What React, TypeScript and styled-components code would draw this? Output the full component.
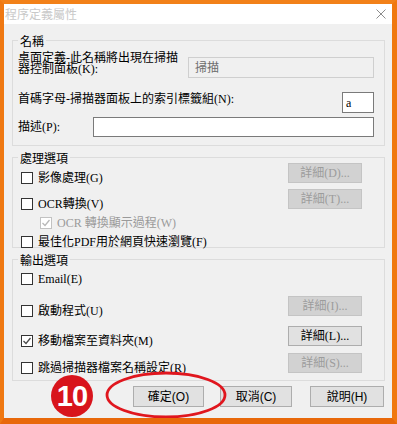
import React from 'react';
import styled, { createGlobalStyle } from 'styled-components';

const GlobalStyle = createGlobalStyle`
  html, body { margin: 0; padding: 0; background: #fff; }
  body {
    font-family: "Liberation Serif", "Noto Sans CJK TC", serif;
    font-size: 12px;
    color: #000;
  }
`;

const Frame = styled.div`
  position: relative;
  width: 397px;
  height: 424px;
  box-sizing: border-box;
  border-style: solid;
  border-color: #f28119 #f0780f #e8680a #ef7812;
  border-width: 4px 5px 6px 4px;
  display: flex;
  flex-direction: column;
  overflow: hidden;
`;

const TitleBar = styled.div`
  height: 20px;
  flex: none;
  background: #fff;
  display: flex;
  align-items: center;
  justify-content: space-between;
  padding: 0 6px 0 1px;
`;

const TitleText = styled.span`
  font-family: "Noto Sans CJK TC", sans-serif;
  font-size: 12px;
  line-height: 14px;
  color: #c9c9c9;
`;

const Body = styled.div`
  flex: 1;
  background: #f0f0f0;
  padding: 0 7px 0 8px;
  display: flex;
  flex-direction: column;
`;

const Group = styled.div<{ $top: number; $bottom: number }>`
  margin-top: ${p => p.$top}px;
  border: 1px solid #dcdcdc;
  padding: 0 10px ${p => p.$bottom}px 5px;
  display: flex;
  flex-direction: column;
`;

const GroupTitle = styled.div`
  font-family: "Noto Sans CJK TC", sans-serif;
  width: fit-content;
  margin: -7px 0 -7px 0;
  padding: 0 2px;
  line-height: 14px;
  background: #f0f0f0;
  color: #000;
`;

const FieldRow = styled.div<{ $top: number; $align?: string }>`
  display: flex;
  align-items: ${p => p.$align || 'center'};
  margin-top: ${p => p.$top}px;
`;

const FieldLabel = styled.label<{ $w?: number; $lift?: number }>`
  flex: none;
  width: ${p => (p.$w ? `${p.$w}px` : 'auto')};
  line-height: 11px;
  white-space: pre-line;
  margin-bottom: ${p => p.$lift || 0}px;
`;

const TextBox = styled.div<{ $w?: number; $h: number; $disabled?: boolean; $top?: number }>`
  box-sizing: border-box;
  height: ${p => p.$h}px;
  width: ${p => (p.$w ? `${p.$w}px` : 'auto')};
  flex: ${p => (p.$w ? 'none' : '1')};
  margin-top: ${p => p.$top || 0}px;
  margin-left: auto;
  border: 1px solid ${p => (p.$disabled ? '#cfcfcf' : '#7a7a7a')};
  background: ${p => (p.$disabled ? '#f0f0f0' : '#fff')};
  color: ${p => (p.$disabled ? '#6d6d6d' : '#000')};
  font-family: "Liberation Serif", "Noto Sans CJK TC", serif;
  padding: 0 ${p => (p.$disabled ? 6 : 3)}px;
  display: flex;
  align-items: center;
  line-height: 12px;
`;

const OptionRow = styled.div<{ $top: number }>`
  display: flex;
  align-items: flex-start;
  margin-top: ${p => p.$top}px;
`;

const CheckItem = styled.label<{ $indent?: number; $offset?: number; $disabled?: boolean }>`
  display: flex;
  align-items: center;
  gap: 5px;
  height: 11px;
  margin-left: ${p => p.$indent ?? 3}px;
  margin-top: ${p => p.$offset ?? 0}px;
  color: ${p => (p.$disabled ? '#9a9a9a' : '#000')};
  line-height: 12px;
  white-space: nowrap;
`;

const Box = styled.span<{ $disabled?: boolean }>`
  flex: none;
  box-sizing: border-box;
  width: 12px;
  height: 12px;
  border: 1px solid ${p => (p.$disabled ? '#c2c2c2' : '#333')};
  background: #fff;
  display: flex;
  align-items: center;
  justify-content: center;
`;

const DetailButton = styled.button<{ $disabled?: boolean }>`
  box-sizing: border-box;
  margin-left: auto;
  margin-right: 12px;
  width: 74px;
  height: 20px;
  padding: 0;
  border: 1px solid ${p => (p.$disabled ? '#c4c4c4' : '#adadad')};
  background: ${p => (p.$disabled ? '#d2d2d2' : '#e1e1e1')};
  color: ${p => (p.$disabled ? '#9c9c9c' : '#000')};
  font-family: "Liberation Serif", "Noto Sans CJK TC", serif;
  font-size: 12px;
  line-height: 12px;
`;

const ButtonBar = styled.div`
  display: flex;
  justify-content: flex-end;
  margin-top: 5px;
  padding-right: 1px;
`;

const DialogButton = styled.button<{ $w: number; $gap?: number }>`
  box-sizing: border-box;
  width: ${p => p.$w}px;
  height: 21px;
  margin-left: ${p => p.$gap || 0}px;
  padding: 0;
  border: 1px solid #adadad;
  background: #e1e1e1;
  color: #000;
  font-family: "Liberation Sans", "Noto Sans CJK TC", sans-serif;
  font-size: 12px;
  line-height: 12px;
`;

const StepBadge = styled.div`
  position: absolute;
  left: 47px;
  top: 371px;
  width: 42px;
  height: 42px;
  border-radius: 50%;
  background: #d8141c;
  color: #fff;
  font-family: "Liberation Sans", sans-serif;
  font-weight: bold;
  font-size: 29px;
  display: flex;
  align-items: center;
  justify-content: center;
  letter-spacing: -1px;
`;

const Ring = styled.svg`
  position: absolute;
  left: 100px;
  top: 366px;
  pointer-events: none;
`;

const CloseIcon = () => (
  <svg width="10" height="10" viewBox="0 0 10 10">
    <path d="M0.5 0.5 L9.5 9.5 M9.5 0.5 L0.5 9.5" stroke="#8c8c8c" strokeWidth="1" fill="none" />
  </svg>
);

const CheckBox = ({ checked, disabled }: { checked?: boolean; disabled?: boolean }) => (
  <Box $disabled={disabled}>
    {checked && (
      <svg width="10" height="10" viewBox="0 0 10 10">
        <polyline
          points="1.5,5 4,7.5 8.5,2"
          fill="none"
          stroke={disabled ? '#b8b8b8' : '#4a4a4a'}
          strokeWidth="1.3"
        />
      </svg>
    )}
  </Box>
);

const App = () => {
  return (
    <>
      <GlobalStyle />
      <Frame>
        <TitleBar>
          <TitleText>程序定義屬性</TitleText>
          <CloseIcon />
        </TitleBar>
        <Body>
          <Group $top={16} $bottom={8}>
            <GroupTitle>名稱</GroupTitle>
            <FieldRow $top={12} $align="flex-start">
              <FieldLabel $w={170}>{'桌面定義-此名稱將出現在掃描\n器控制面板(K):'}</FieldLabel>
              <TextBox $w={186} $h={21} $top={4} $disabled>
                掃描
              </TextBox>
            </FieldRow>
            <FieldRow $top={14}>
              <FieldLabel $lift={6}>首碼字母-掃描器面板上的索引標籤組(N):</FieldLabel>
              <TextBox $w={32} $h={21}>
                a
              </TextBox>
            </FieldRow>
            <FieldRow $top={4}>
              <FieldLabel $w={75}>描述(P):</FieldLabel>
              <TextBox $h={20} />
            </FieldRow>
          </Group>

          <Group $top={11} $bottom={0}>
            <GroupTitle>處理選項</GroupTitle>
            <OptionRow $top={5}>
              <CheckItem $offset={9}>
                <CheckBox />
                影像處理(G)
              </CheckItem>
              <DetailButton $disabled>詳細(D)...</DetailButton>
            </OptionRow>
            <OptionRow $top={6}>
              <CheckItem $offset={9}>
                <CheckBox />
                OCR轉換(V)
              </CheckItem>
              <DetailButton $disabled>詳細(T)...</DetailButton>
            </OptionRow>
            <OptionRow $top={8}>
              <CheckItem $indent={22} $disabled>
                <CheckBox checked disabled />
                OCR 轉換顯示過程(W)
              </CheckItem>
            </OptionRow>
            <OptionRow $top={8}>
              <CheckItem>
                <CheckBox />
                最佳化PDF用於網頁快速瀏覽(F)
              </CheckItem>
            </OptionRow>
          </Group>

          <Group $top={11} $bottom={7}>
            <GroupTitle>輸出選項</GroupTitle>
            <OptionRow $top={13}>
              <CheckItem>
                <CheckBox />
                Email(E)
              </CheckItem>
            </OptionRow>
            <OptionRow $top={12}>
              <CheckItem $offset={9}>
                <CheckBox />
                啟動程式(U)
              </CheckItem>
              <DetailButton $disabled>詳細(I)...</DetailButton>
            </OptionRow>
            <OptionRow $top={10}>
              <CheckItem $offset={9}>
                <CheckBox checked />
                移動檔案至資料夾(M)
              </CheckItem>
              <DetailButton>詳細(L)...</DetailButton>
            </OptionRow>
            <OptionRow $top={7}>
              <CheckItem $offset={9}>
                <CheckBox />
                跳過掃描器檔案名稱設定(R)
              </CheckItem>
              <DetailButton $disabled>詳細(S)...</DetailButton>
            </OptionRow>
          </Group>

          <ButtonBar>
            <DialogButton $w={71}>確定(O)</DialogButton>
            <DialogButton $w={72} $gap={16}>
              取消(C)
            </DialogButton>
            <DialogButton $w={74} $gap={18}>
              說明(H)
            </DialogButton>
          </ButtonBar>
        </Body>

        <StepBadge>10</StepBadge>
        <Ring width="130" height="56" viewBox="0 0 130 56">
          <ellipse cx="62" cy="25" rx="59" ry="22" fill="none" stroke="#e0161e" strokeWidth="2.8" />
        </Ring>
      </Frame>
    </>
  );
};

export default App;
